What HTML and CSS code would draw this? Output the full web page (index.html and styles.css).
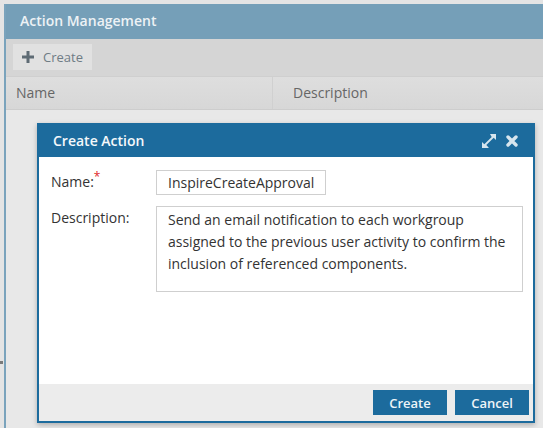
FILE: index.html
```html
<!DOCTYPE html>
<html lang="en">
<head>
    <meta charset="UTF-8">
    <title>Action Management</title>
    <link rel="stylesheet" href="styles.css">
</head>
<body>

    <!-- Action Management panel -->
    <div class="panel">
        <div class="panel-header">Action Management</div>
        <div class="toolbar">
            <button class="tool-btn">
                <svg width="12" height="12" viewBox="0 0 12 12"><path d="M4.5 0h3v4.5H12v3H7.5V12h-3V7.5H0v-3h4.5z" fill="#5e6b74"/></svg>
                Create
            </button>
        </div>
        <div class="grid-head">
            <div class="col col-name">Name</div>
            <div class="col col-desc">Description</div>
        </div>
        <div class="grid-body"></div>
    </div>
    <span class="edge-tick"></span>

    <!-- Create Action dialog -->
    <div class="dialog">
        <div class="dialog-header">
            <span class="dialog-title">Create Action</span>
            <span class="dialog-icons">
                <svg width="16" height="16" viewBox="0 0 16 16"><path d="M9 1h6v6l-2.3-2.3-7.4 7.4L7.6 14.4V15H1V9l2.3 2.3 7.4-7.4z" fill="#d6e5ee"/></svg>
                <svg width="12" height="12" viewBox="0 0 12 12"><path d="M2 2l8 8M10 2l-8 8" stroke="#d6e5ee" stroke-width="3.4" stroke-linecap="round"/></svg>
            </span>
        </div>
        <div class="dialog-body">
            <div class="form-row">
                <label class="form-label">Name:<sup class="req">*</sup></label>
                <input class="name-input" type="text" value="InspireCreateApproval">
            </div>
            <div class="form-row">
                <label class="form-label">Description:</label>
                <textarea class="desc-input">Send an email notification to each workgroup assigned to the previous user activity to confirm the inclusion of referenced components.</textarea>
            </div>
        </div>
        <div class="dialog-footer">
            <button class="btn">Create</button>
            <button class="btn">Cancel</button>
        </div>
    </div>

</body>
</html>
```
FILE: styles.css
```css
 body {
     font-family: "Open Sans", Arial, sans-serif;
     margin: 0;
     padding: 4px 0 0 4px;
     height: 428px;
     box-sizing: border-box;
     background: #e4e4e4;
     overflow: hidden;
 }

 /* Panel */
 .panel {
     display: flex;
     flex-direction: column;
     height: 100%;
     border-left: 2px solid #7aa3bc;
     background: #e8e8e8;
 }
 .panel-header {
     height: 35px;
     line-height: 33px;
     padding-left: 14px;
     background: #759fb8;
     color: #edf2f5;
     font-size: 14px;
     font-weight: 600;
 }
 .toolbar {
     height: 37px;
     padding: 5px 7px;
     box-sizing: border-box;
     background: #d5d5d5;
 }
 .tool-btn {
     display: flex;
     align-items: center;
     gap: 9px;
     height: 26px;
     width: 79px;
     padding: 0 0 0 9px;
     border: none;
     background: #e1e1e1;
     color: #6f7c85;
     font-family: inherit;
     font-size: 13px;
 }
 .grid-head {
     display: flex;
     height: 34px;
     background: linear-gradient(#dedede, #d7d7d7);
     border-top: 1px solid #cfcfcf;
     border-bottom: 1px solid #cdcdcd;
     box-sizing: border-box;
     color: #666;
     font-size: 14px;
 }
 .col {
     line-height: 32px;
     padding-left: 10px;
 }
 .col-name {
     width: 256px;
     border-right: 1px solid #d0d0d0;
 }
 .col-desc {
     padding-left: 20px;
 }
 .grid-body {
     flex: 1;
 }
 .edge-tick {
     position: absolute;
     left: 0;
     top: 361px;
     width: 3px;
     height: 3px;
     background: #7a7a7a;
 }

 /* Dialog */
 .dialog {
     position: absolute;
     left: 37px;
     top: 123px;
     width: 498px;
     height: 300px;
     box-sizing: border-box;
     border: 2px solid #1c6b9d;
     border-top: none;
     background: #fff;
     display: flex;
     flex-direction: column;
     box-shadow: 0 2px 5px rgba(0, 0, 0, 0.25);
 }
 .dialog-header {
     height: 34px;
     margin: 0 -2px;
     padding: 0 17px 0 16px;
     display: flex;
     align-items: center;
     justify-content: space-between;
     background: #1c6b9d;
     color: #f4f8fb;
 }
 .dialog-title {
     font-size: 14px;
     font-weight: 600;
 }
 .dialog-icons {
     display: flex;
     align-items: center;
     gap: 9px;
     padding-top: 2px;
 }
 .dialog-body {
     flex: 1;
     padding: 13px 10px 0 12px;
 }
 .form-row {
     display: flex;
     margin-bottom: 11px;
 }
 .form-label {
     width: 105px;
     flex-shrink: 0;
     padding-top: 2px;
     color: #333;
     font-size: 14px;
 }
 .req {
     color: #e0262b;
     font-size: 12px;
     line-height: 0;
 }
 .name-input {
     width: 170px;
     height: 25px;
     box-sizing: border-box;
     padding: 0 11px;
     border: 1px solid #cfcfcf;
     color: #333;
     font-family: inherit;
     font-size: 14px;
     outline: none;
 }
 .desc-input {
     width: 367px;
     height: 86px;
     box-sizing: border-box;
     padding: 2px 11px;
     border: 1px solid #cfcfcf;
     color: #333;
     font-family: inherit;
     font-size: 14px;
     line-height: 22px;
     resize: none;
     outline: none;
 }
 .dialog-footer {
     height: 37px;
     display: flex;
     justify-content: flex-end;
     gap: 8px;
     padding: 6px 4px 0 0;
     box-sizing: border-box;
     background: #ececec;
 }
 .btn {
     width: 74px;
     height: 25px;
     border: none;
     background: #1c6b9d;
     color: #eef4f8;
     font-family: inherit;
     font-size: 13px;
     font-weight: 600;
 }
```
